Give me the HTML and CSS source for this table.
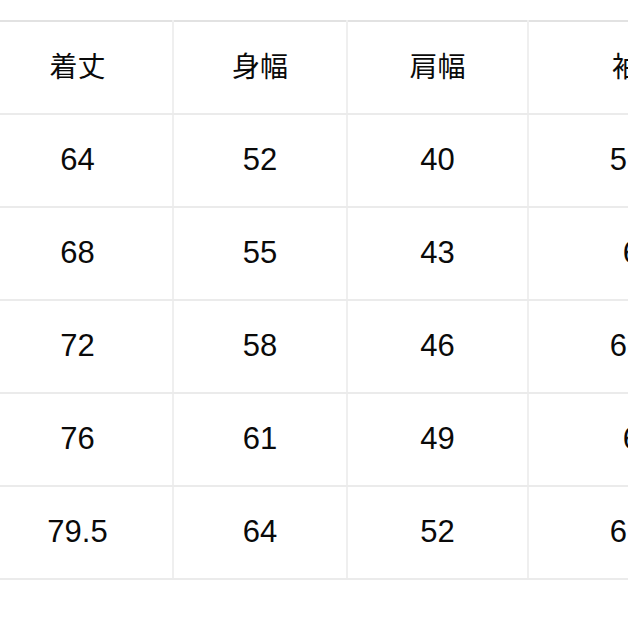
FILE: index.html
```
<!DOCTYPE html>
<html lang="ja">
<head>
<meta charset="utf-8">
<link rel="stylesheet" href="styles.css">
</head>
<body>
<div class="wrap">
<table class="size">
  <colgroup>
    <col class="c1"><col class="c2"><col class="c3"><col class="c4">
  </colgroup>
  <tr class="head"><td>着丈</td><td>身幅</td><td>肩幅</td><td>袖丈</td></tr>
  <tr><td>64</td><td>52</td><td>40</td><td>59.5</td></tr>
  <tr><td>68</td><td>55</td><td>43</td><td>61</td></tr>
  <tr><td>72</td><td>58</td><td>46</td><td>62.5</td></tr>
  <tr><td>76</td><td>61</td><td>49</td><td>64</td></tr>
  <tr><td>79.5</td><td>64</td><td>52</td><td>65.5</td></tr>
</table>
</div>
</body>
</html>
```
FILE: styles.css
```
html, body {
  margin: 0;
  padding: 0;
  background: #ffffff;
}
.wrap {
  width: 628px;
  height: 628px;
  overflow: hidden;
  padding-top: 20px;
  box-sizing: border-box;
}
.size {
  border-collapse: collapse;
  table-layout: fixed;
  width: 769px;
  margin-left: -17px;
  font-family: "Liberation Sans", Arial, "Noto Sans CJK JP", sans-serif;
  font-size: 31px;
  color: #0a0a0a;
}
.c1 { width: 190px; }
.c2 { width: 174px; }
.c3 { width: 181px; }
.c4 { width: 224px; }
.size td {
  height: 89px;
  padding: 0 0 2px 0;
  line-height: 1.15;
  text-align: center;
  vertical-align: middle;
  border-top: 2px solid #ebebeb;
  border-bottom: 2px solid #ebebeb;
  border-left: 2px solid #efefef;
  border-right: 2px solid #efefef;
}
.size tr td:first-child { border-left: none; }
.head td {
  height: 86px;
  padding-bottom: 5px;
  border-top: 2px solid #e2e2e2;
  font-family: "Noto Sans CJK JP", sans-serif;
  font-size: 28px;
}
```
